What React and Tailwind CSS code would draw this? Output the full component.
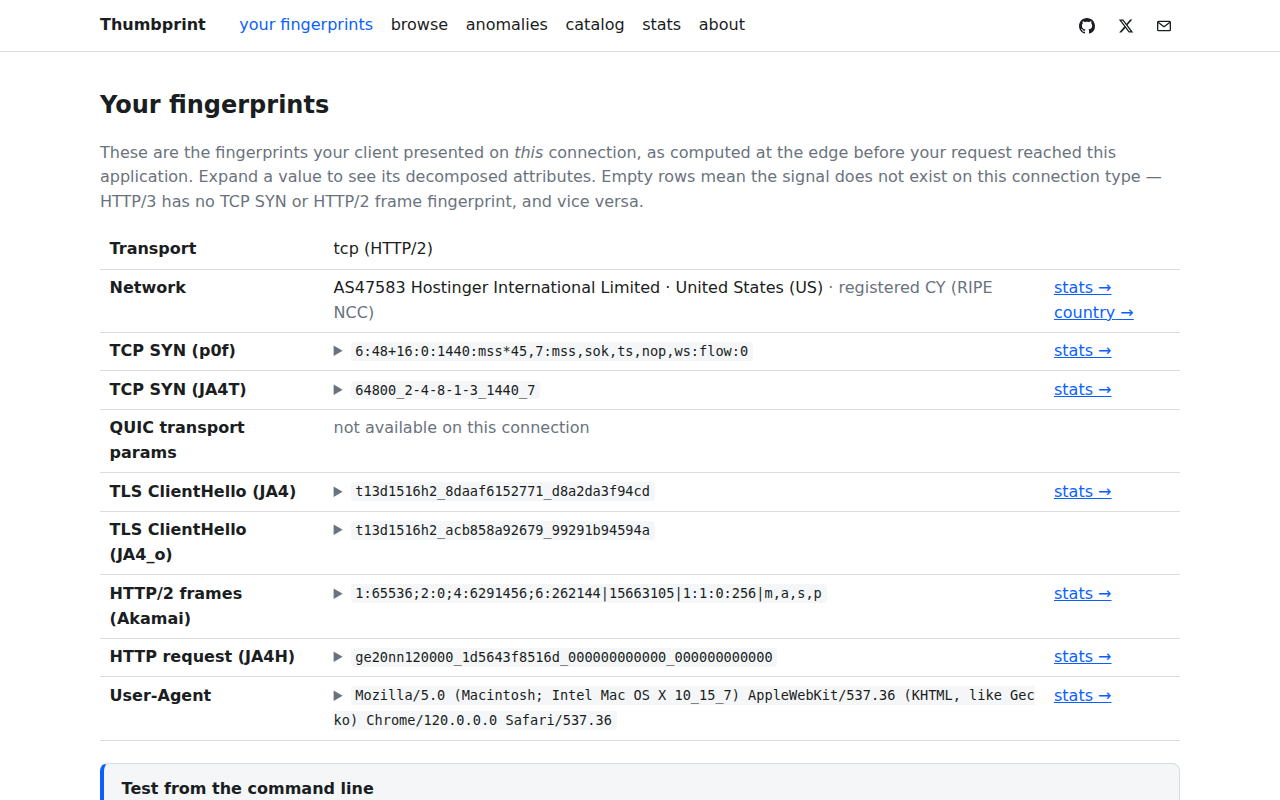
const NAV = ["your fingerprints", "browse", "anomalies", "catalog", "stats", "about"];

const ROWS = [
    { label: "Transport", text: "tcp (HTTP/2)" },
    {
        label: "Network",
        text: "AS47583 Hostinger International Limited · United States (US)",
        note: " · registered CY (RIPE NCC)",
        links: ["stats", "country"],
    },
    { label: "TCP SYN (p0f)", code: "6:48+16:0:1440:mss*45,7:mss,sok,ts,nop,ws:flow:0", links: ["stats"] },
    { label: "TCP SYN (JA4T)", code: "64800_2-4-8-1-3_1440_7", links: ["stats"] },
    { label: "QUIC transport params", note: "not available on this connection" },
    { label: "TLS ClientHello (JA4)", code: "t13d1516h2_8daaf6152771_d8a2da3f94cd", links: ["stats"] },
    { label: "TLS ClientHello (JA4_o)", code: "t13d1516h2_acb858a92679_99291b94594a" },
    { label: "HTTP/2 frames (Akamai)", code: "1:65536;2:0;4:6291456;6:262144|15663105|1:1:0:256|m,a,s,p", links: ["stats"] },
    { label: "HTTP request (JA4H)", code: "ge20nn120000_1d5643f8516d_000000000000_000000000000", links: ["stats"] },
    {
        label: "User-Agent",
        code: "Mozilla/5.0 (Macintosh; Intel Mac OS X 10_15_7) AppleWebKit/537.36 (KHTML, like Gecko) Chrome/120.0.0.0 Safari/537.36",
        links: ["stats"],
    },
];

function GithubIcon() {
    return (
        <svg viewBox="0 0 16 16" className="size-4" fill="currentColor">
            <path d="M8 0C3.58 0 0 3.58 0 8c0 3.54 2.29 6.53 5.47 7.59.4.07.55-.17.55-.38 0-.19-.01-.82-.01-1.49-2.01.37-2.53-.49-2.69-.94-.09-.23-.48-.94-.82-1.13-.28-.15-.68-.52-.01-.53.63-.01 1.08.58 1.23.82.72 1.21 1.87.87 2.33.66.07-.52.28-.87.51-1.07-1.78-.2-3.64-.89-3.64-3.95 0-.87.31-1.59.82-2.15-.08-.2-.36-1.02.08-2.12 0 0 .67-.21 2.2.82.64-.18 1.32-.27 2-.27s1.36.09 2 .27c1.53-1.04 2.2-.82 2.2-.82.44 1.1.16 1.92.08 2.12.51.56.82 1.27.82 2.15 0 3.07-1.87 3.75-3.65 3.95.29.25.54.73.54 1.48 0 1.07-.01 1.93-.01 2.2 0 .21.15.46.55.38A8.01 8.01 0 0 0 16 8c0-4.42-3.58-8-8-8z" />
        </svg>
    );
}

function XIcon() {
    return (
        <svg viewBox="0 0 24 24" className="size-4" fill="currentColor">
            <path d="M18.244 2.25h3.308l-7.227 8.26 8.502 11.24H16.17l-5.214-6.817L4.99 21.75H1.68l7.73-8.835L1.254 2.25H8.08l4.713 6.231zm-1.161 17.52h1.833L7.084 4.126H5.117z" />
        </svg>
    );
}

function MailIcon() {
    return (
        <svg viewBox="0 0 24 24" className="size-4" fill="none" stroke="currentColor" strokeWidth="2" strokeLinejoin="round">
            <rect x="2.5" y="5" width="19" height="14" rx="1.5" />
            <path d="m3 6.5 9 6.5 9-6.5" />
        </svg>
    );
}

function Value({ row }) {
    if (row.code) {
        return (
            <details>
                <summary className="cursor-pointer text-[#6a737d]">
                    <code className="rounded-[4px] bg-[#f4f6f8] px-[0.35em] py-[0.1em] font-['DejaVu_Sans_Mono',monospace] text-[13.6px] break-all text-[#1a1d21]">
                        {row.code}
                    </code>
                </summary>
            </details>
        );
    }
    return (
        <>
            {row.text}
            {row.note && <span className="text-[#6a737d]">{row.note}</span>}
        </>
    );
}

export default function App() {
    return (
        <div className="h-screen overflow-hidden bg-white font-['DejaVu_Sans',sans-serif] text-base leading-[1.55] text-[#1a1d21]">
            <header className="border-b border-[#d8dce0]">
                <div className="mx-auto flex h-[51px] w-[1080px] items-center">
                    <div className="flex pb-px">
                        <a href="#" className="mr-[33.6px] font-bold">Thumbprint</a>
                        <nav className="flex gap-[17.6px]">
                            {NAV.map((item, i) => (
                                <a key={item} href="#" className={i === 0 ? "text-[#0b5fff]" : ""}>{item}</a>
                            ))}
                        </nav>
                    </div>
                    <div className="ml-auto flex items-center gap-[22.4px] pr-2">
                        <a href="#" aria-label="GitHub"><GithubIcon /></a>
                        <a href="#" aria-label="X"><XIcon /></a>
                        <a href="#" aria-label="Email"><MailIcon /></a>
                    </div>
                </div>
            </header>

            <main className="mx-auto w-[1080px] pt-[35.35px]">
                <h1 className="text-2xl leading-[37.2px] font-bold">Your fingerprints</h1>
                <p className="mt-4 text-[#6a737d]">
                    These are the fingerprints your client presented on <em>this</em> connection, as computed at the edge
                    before your request reached this application. Expand a value to see its decomposed attributes. Empty
                    rows mean the signal does not exist on this connection type — HTTP/3 has no TCP SYN or HTTP/2 frame
                    fingerprint, and vice versa.
                </p>

                <table className="mt-4 w-full table-fixed border-collapse">
                    <colgroup>
                        <col className="w-[224px]" />
                        <col />
                        <col className="w-[135.6px]" />
                    </colgroup>
                    <tbody>
                        {ROWS.map((row) => (
                            <tr key={row.label} className="border-b border-[#d8dce0] align-top">
                                <th className="px-[9.6px] py-[6.4px] text-left font-bold">{row.label}</th>
                                <td className="px-[9.6px] py-[6.4px]"><Value row={row} /></td>
                                <td className="px-[9.6px] py-[6.4px]">
                                    {row.links?.map((link) => (
                                        <div key={link}>
                                            <a href="#" className="text-[#0b5fff] underline">{link} →</a>
                                        </div>
                                    ))}
                                </td>
                            </tr>
                        ))}
                    </tbody>
                </table>

                <section className="mt-[22.4px] h-40 rounded-lg border border-l-4 border-[#d8dce0] border-l-[#0b5fff] bg-[#f4f6f8] px-[17.6px] py-[12.8px]">
                    <h2 className="font-bold">Test from the command line</h2>
                </section>
            </main>
        </div>
    );
}
